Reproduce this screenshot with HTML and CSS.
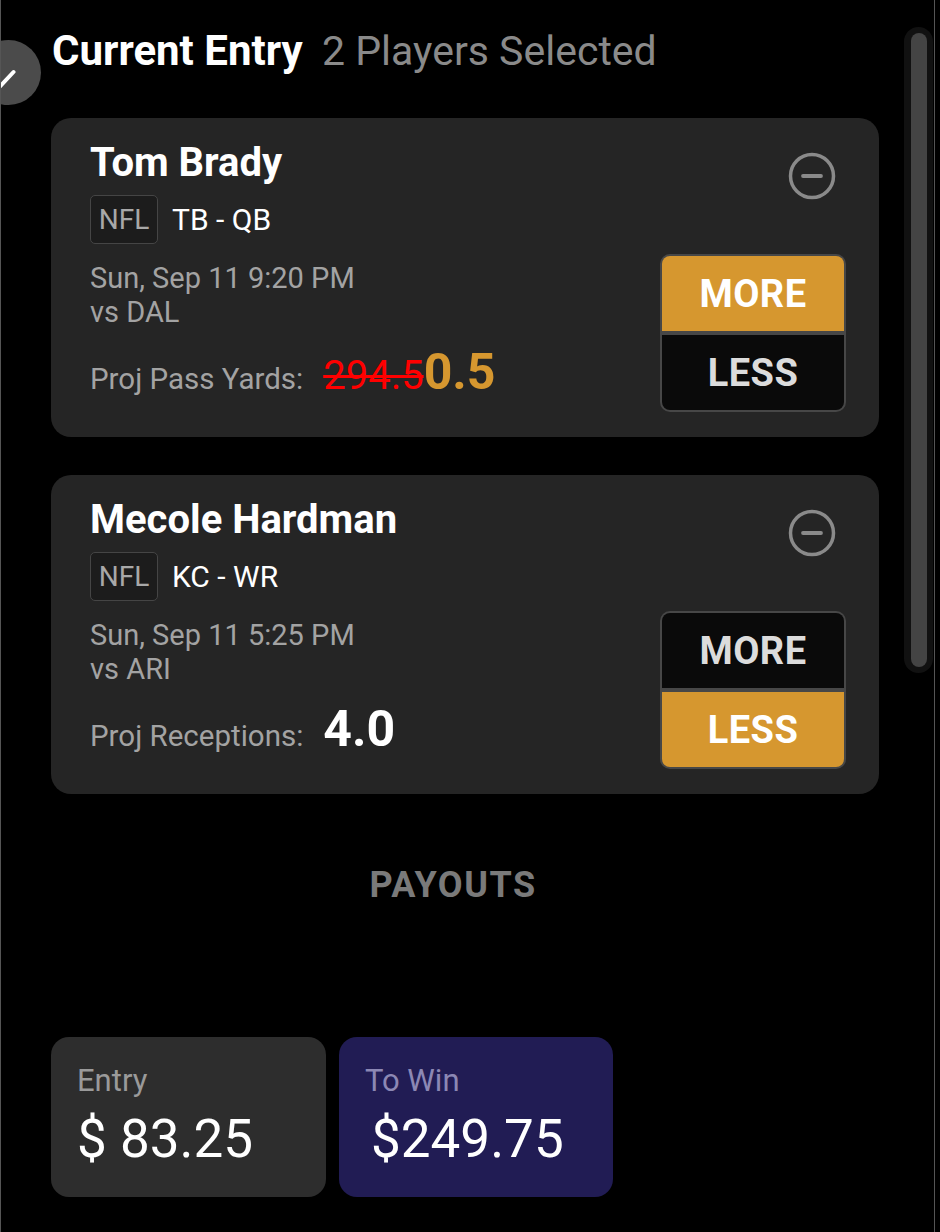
FILE: index.html
```html
<!DOCTYPE html>
<html lang="en">
<head>
  <meta charset="UTF-8" />
  <meta name="viewport" content="width=device-width, initial-scale=1.0"/>
  <title>Current Entry</title>
  <link rel="stylesheet" href="styles.css">
</head>
<body>

  <div class="frame">

    <!-- collapse toggle sitting on the edge -->
    <button class="edge-toggle" aria-label="Collapse">
      <svg width="65" height="65" viewBox="0 0 65 65">
        <path d="M15.5 39 L23.5 47 L37.5 32" fill="none" stroke="#fff" stroke-width="4" stroke-linecap="round" stroke-linejoin="round"/>
      </svg>
    </button>

    <main class="entry">
      <h1 class="entry-title">Current Entry <span class="entry-count">2 Players Selected</span></h1>

      <!-- Player 1 -->
      <div class="pick">
        <div class="pick-info">
          <div class="player-name">Tom Brady</div>
          <div class="player-meta">
            <span class="league">NFL</span>
            <span class="team">TB - QB</span>
          </div>
          <div class="game">Sun, Sep 11 9:20 PM<br>vs DAL</div>
          <div class="proj">
            <span class="proj-label">Proj Pass Yards:</span>
            <span class="proj-old">294.5</span><span class="proj-value promo">0.5</span>
          </div>
        </div>
        <div class="pick-side">
          <button class="remove" aria-label="Remove">
            <svg width="48" height="48" viewBox="0 0 48 48">
              <circle cx="24" cy="24" r="21.5" fill="none" stroke="#8a8a8a" stroke-width="3.5"/>
              <line x1="15" y1="24" x2="33" y2="24" stroke="#8a8a8a" stroke-width="3.8" stroke-linecap="round"/>
            </svg>
          </button>
          <div class="choice">
            <div class="choice-btn active">MORE</div>
            <div class="choice-btn">LESS</div>
          </div>
        </div>
      </div>

      <!-- Player 2 -->
      <div class="pick">
        <div class="pick-info">
          <div class="player-name">Mecole Hardman</div>
          <div class="player-meta">
            <span class="league">NFL</span>
            <span class="team">KC - WR</span>
          </div>
          <div class="game">Sun, Sep 11 5:25 PM<br>vs ARI</div>
          <div class="proj">
            <span class="proj-label">Proj Receptions:</span>
            <span class="proj-value">4.0</span>
          </div>
        </div>
        <div class="pick-side">
          <button class="remove" aria-label="Remove">
            <svg width="48" height="48" viewBox="0 0 48 48">
              <circle cx="24" cy="24" r="21.5" fill="none" stroke="#8a8a8a" stroke-width="3.5"/>
              <line x1="15" y1="24" x2="33" y2="24" stroke="#8a8a8a" stroke-width="3.8" stroke-linecap="round"/>
            </svg>
          </button>
          <div class="choice">
            <div class="choice-btn">MORE</div>
            <div class="choice-btn active">LESS</div>
          </div>
        </div>
      </div>

      <h2 class="payouts">PAYOUTS</h2>

      <div class="totals">
        <div class="total">
          <div class="total-label">Entry</div>
          <div class="total-amount">$ 83.25</div>
        </div>
        <div class="total win">
          <div class="total-label">To Win</div>
          <div class="total-amount">$249.75</div>
        </div>
      </div>
    </main>

    <aside class="scroll-rail">
      <div class="scroll-track">
        <div class="scroll-thumb"></div>
      </div>
    </aside>

  </div>

</body>
</html>
```

FILE: styles.css
```css
body {
  margin: 0;
  background-color: #000;
  font-family: Roboto, "Liberation Sans", sans-serif;
  color: #fff;
}

.frame {
  position: relative;
  display: flex;
  width: 935px;
  min-height: 1232px;
  box-sizing: border-box;
  border-left: 1px solid #555;
  border-right: 1px solid #555;
  overflow: hidden;
}

.edge-toggle {
  position: absolute;
  left: -25px;
  top: 40px;
  width: 65px;
  height: 65px;
  padding: 0;
  border: none;
  border-radius: 50%;
  background-color: #4b4b4b;
  z-index: 10;
}

.edge-toggle svg {
  display: block;
}

.entry {
  width: 828px;
  padding-left: 50px;
  flex-shrink: 0;
}

.entry-title {
  margin: 27px 0 43px 1px;
  font-size: 42px;
  line-height: 48px;
  font-weight: 700;
  white-space: nowrap;
}

.entry-count {
  margin-left: 9px;
  font-size: 41px;
  font-weight: 400;
  color: #8a8a8a;
}

/* player card */
.pick {
  display: flex;
  justify-content: space-between;
  background-color: #252525;
  border-radius: 20px;
  padding: 21px 33px 25px 39px;
  margin-bottom: 38px;
}

.player-name {
  font-size: 40px;
  line-height: 48px;
  font-weight: 700;
}

.player-meta {
  display: flex;
  align-items: center;
  margin-top: 8px;
  font-size: 30px;
}

.league {
  display: flex;
  align-items: center;
  justify-content: center;
  width: 66px;
  height: 47px;
  border: 1px solid #454545;
  border-radius: 5px;
  background-color: #1c1c1c;
  font-size: 28px;
  color: #a8a8a8;
}

.team {
  margin-left: 14px;
}

.game {
  margin-top: 17px;
  font-size: 29px;
  line-height: 34px;
  color: #a3a3a3;
}

.proj {
  margin-top: 17px;
  line-height: 52px;
  white-space: nowrap;
}

.proj-label {
  font-size: 29.5px;
  color: #a3a3a3;
  margin-right: 16px;
}

.proj-old {
  font-size: 40px;
  color: #f00;
  text-decoration: line-through;
  text-decoration-thickness: 3px;
}

.proj-value {
  font-size: 50px;
  font-weight: 700;
}

.proj-value.promo {
  color: #d6972f;
}

.pick-side {
  display: flex;
  flex-direction: column;
  align-items: flex-end;
}

.remove {
  margin: 13px 10px 0 0;
  padding: 0;
  border: none;
  background: none;
  width: 48px;
  height: 48px;
}

.remove svg {
  display: block;
}

.choice {
  margin-top: 54px;
  width: 182px;
  border: 2px solid #474747;
  border-radius: 10px;
  overflow: hidden;
  display: flex;
  flex-direction: column;
  gap: 4px;
  background-color: #474747;
}

.choice-btn {
  height: 75px;
  display: flex;
  align-items: center;
  justify-content: center;
  font-size: 38px;
  font-weight: 700;
  letter-spacing: 0.5px;
  color: #dcdcdc;
  background-color: #0a0a0a;
}

.choice-btn.active {
  color: #fff;
  background-color: #d6972f;
}

.payouts {
  margin: 69px 24px 0 0;
  text-align: center;
  font-size: 36px;
  line-height: 44px;
  font-weight: 700;
  letter-spacing: 1.5px;
  color: #7a7a7a;
}

/* entry / win totals */
.totals {
  display: flex;
  gap: 13px;
  margin-top: 130px;
}

.total {
  width: 275px;
  height: 160px;
  box-sizing: border-box;
  padding: 26px 0 0 26px;
  background-color: #2d2d2d;
  border-radius: 18px;
}

.total.win {
  width: 274px;
  background-color: #211c54;
}

.total-label {
  font-size: 31px;
  line-height: 36px;
  color: #9a9a9a;
}

.win .total-label {
  color: #8c88b4;
}

.total-amount {
  margin-top: 13px;
  font-size: 53px;
  line-height: 54px;
}

.win .total-amount {
  padding-left: 6px;
}

/* scrollbar */
.scroll-rail {
  margin-left: 25px;
  padding-top: 27px;
}

.scroll-track {
  width: 29px;
  height: 646px;
  box-sizing: border-box;
  padding: 6px 6px 6px 7px;
  background-color: #111;
  border-radius: 15px;
}

.scroll-thumb {
  height: 100%;
  background-color: #444;
  border-radius: 8px;
}
```
